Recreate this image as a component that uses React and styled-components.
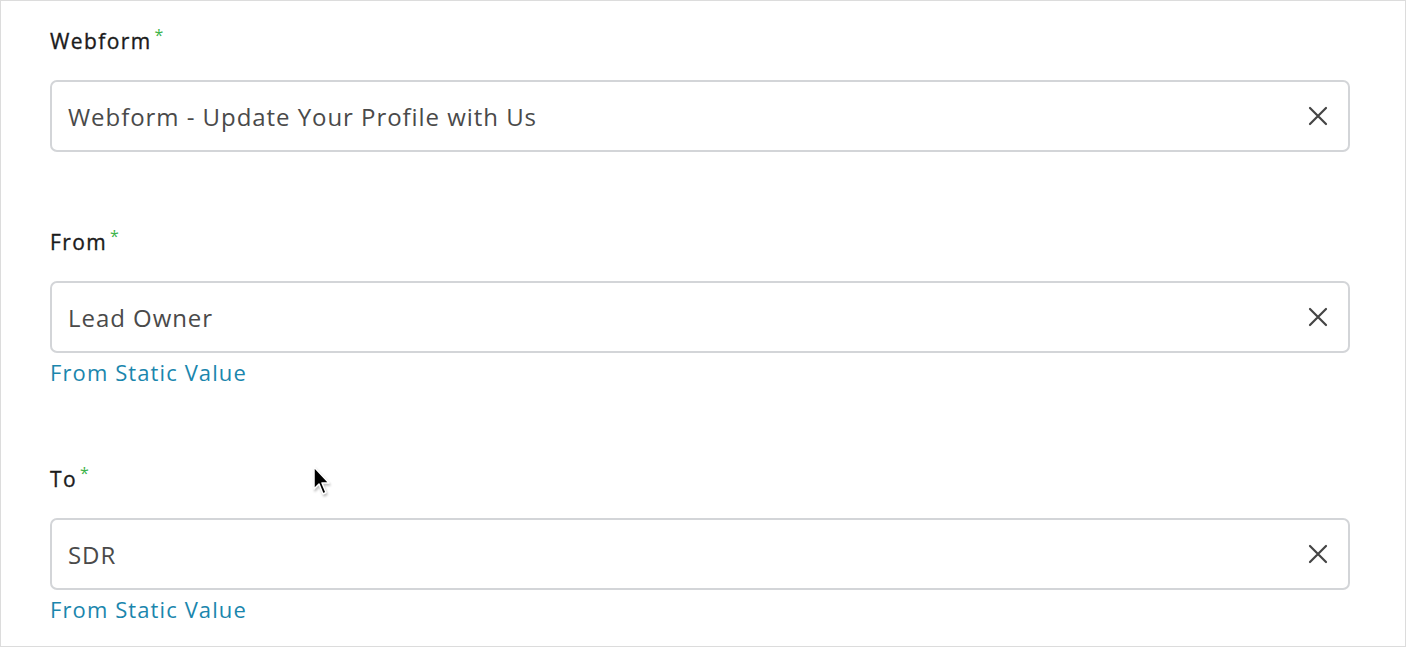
import React from "react";
import styled, { createGlobalStyle } from "styled-components";

const Global = createGlobalStyle`
  html, body { margin: 0; padding: 0; background: #fff; }
  body { font-family: "Open Sans", "Lato", sans-serif; }
`;

const Frame = styled.div`
  position: relative;
  box-sizing: border-box;
  width: 1406px;
  height: 647px;
  border: 1px solid #dcdcdc;
  background: #fff;
  padding: 27px 55px 0 49px;
  overflow: hidden;
`;

const Field = styled.div`
  display: flex;
  flex-direction: column;
  margin-bottom: ${(p) => p.$gap}px;
`;

const Label = styled.div`
  display: flex;
  align-items: flex-start;
  font-size: 21px;
  line-height: 26px;
  font-weight: 500;
  letter-spacing: 1.4px;
  -webkit-text-stroke: 0.35px #1b1b1b;
  color: #1b1b1b;
  margin-bottom: 26px;
`;

const Star = styled.span`
  color: #3cb34a;
  font-size: 16px;
  line-height: 16px;
  font-weight: 400;
  -webkit-text-stroke: 0;
  margin-left: 3px;
  margin-top: -1px;
`;

const Input = styled.div`
  box-sizing: border-box;
  height: 72px;
  border: 2px solid #d3d5d8;
  border-radius: 7px;
  display: flex;
  align-items: center;
  justify-content: space-between;
  padding: 0 18px 0 16px;
  font-size: 24px;
  letter-spacing: 0.95px;
  color: #4a4a4a;
`;

const Clear = styled.button`
  border: 0;
  background: none;
  padding: 0;
  width: 24px;
  height: 24px;
  display: flex;
  align-items: center;
  justify-content: center;
  cursor: pointer;
`;

const Link = styled.a`
  font-size: 22px;
  line-height: 24px;
  letter-spacing: 1.1px;
  color: #1a86ad;
  margin-top: 7px;
  cursor: pointer;
  text-decoration: none;
`;

const Cursor = styled.svg`
  position: absolute;
  left: 311px;
  top: 464px;
  filter: drop-shadow(1px 2px 1px rgba(0,0,0,0.25));
`;

const X = () => (
  <svg width="22" height="22" viewBox="0 0 22 22">
    <path d="M3 3 L19 19 M19 3 L3 19" stroke="#444" strokeWidth="2.2" strokeLinecap="round" />
  </svg>
);

const FormField = ({ label, value, link, gap }) => (
  <Field $gap={gap}>
    <Label>
      {label}
      <Star>*</Star>
    </Label>
    <Input>
      <span>{value}</span>
      <Clear aria-label="clear">
        <X />
      </Clear>
    </Input>
    {link && <Link>From Static Value</Link>}
  </Field>
);

export default function App() {
  return (
    <>
      <Global />
      <Frame>
        <FormField label="Webform" value="Webform - Update Your Profile with Us" gap={77} />
        <FormField label="From" value="Lead Owner" link gap={82} />
        <FormField label="To" value="SDR" link gap={0} />
        <Cursor width="20" height="34" viewBox="0 0 20 34">
          <path d="M2 2 L2 24 L7 19 L11 29 L14 27.5 L10 18 L17 18 Z" fill="#000" stroke="#fff" strokeWidth="1.5" strokeLinejoin="round" />
        </Cursor>
      </Frame>
    </>
  );
}
